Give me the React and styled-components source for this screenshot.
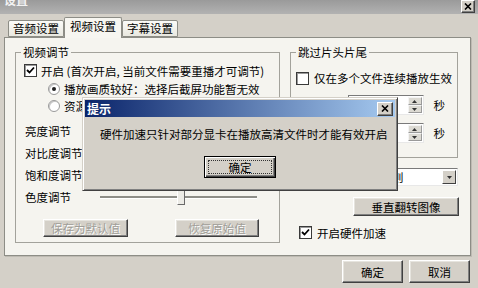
import React from 'react';
import styled, { createGlobalStyle } from 'styled-components';

const GlobalStyle = createGlobalStyle`
  html, body { margin: 0; padding: 0; }
  body {
    font-family: "Noto Sans CJK SC", "Noto Sans", sans-serif;
    font-size: 11.5px;
    color: #000;
    background: #d4d0c8;
  }
`;

const Window = styled.div`
  position: relative;
  width: 478px;
  height: 288px;
  overflow: hidden;
  background: #d4d0c8;
  display: flex;
  flex-direction: column;
`;

const TitleBar = styled.div`
  flex: none;
  height: 14px;
  background: linear-gradient(#9a9a9a, #b2b2b2);
  display: flex;
  justify-content: space-between;
  align-items: flex-start;
  padding: 0 3px 0 4px;
  overflow: hidden;
`;

const TitleText = styled.span`
  color: #f2f2f2;
  font-weight: bold;
  font-size: 12px;
  line-height: 14px;
  margin-top: -7px;
`;

const CloseBox = styled.div`
  width: ${(p) => p.w}px;
  height: ${(p) => p.h}px;
  box-sizing: border-box;
  background: #d4d0c8;
  border: 1px solid;
  border-color: #fff #404040 #404040 #fff;
  box-shadow: inset -1px -1px #808080;
  display: flex;
  align-items: center;
  justify-content: center;
  margin-top: ${(p) => p.top || 0}px;
`;

const Body = styled.div`
  padding: 3px 0 0 4px;
  display: flex;
  flex-direction: column;
`;

const Tabs = styled.div`
  display: flex;
  align-items: flex-end;
  height: 20px;
  margin-left: 4px;
  position: relative;
  z-index: 1;
`;

const Tab = styled.div`
  box-sizing: border-box;
  height: ${(p) => (p.active ? 21 : 17)}px;
  margin-bottom: ${(p) => (p.active ? -1 : 0)}px;
  padding: 0 ${(p) => (p.active ? 5 : 4)}px;
  border: 1px solid #8d8d86;
  border-bottom: ${(p) => (p.active ? 'none' : '1px solid #8d8d86')};
  border-radius: 2px 2px 0 0;
  background: ${(p) => (p.active ? '#f7f6f1' : 'linear-gradient(#fbfbf8, #e9e8e0)')};
  line-height: ${(p) => (p.active ? 17 : 15)}px;
  white-space: nowrap;
`;

const Panel = styled.div`
  box-sizing: border-box;
  width: 467px;
  height: 219px;
  border: 1px solid #8d8d86;
  box-shadow: 1px 1px 0 #bdbab2;
  background: #f5f4ef;
  display: flex;
  gap: 10px;
  padding: 7px 0 0 10px;
`;

const Group = styled.fieldset`
  box-sizing: border-box;
  margin: 0;
  padding: 0;
  min-width: 0;
  width: ${(p) => p.w}px;
  height: ${(p) => p.h}px;
  border: 1px solid #a3a29b;
  flex: none;
`;

const Legend = styled.legend`
  margin-left: 5px;
  padding: 0 2px;
  line-height: 14px;
`;

const GroupInner = styled.div`
  display: flex;
  flex-direction: column;
  padding: ${(p) => p.pad};
`;

const Row = styled.div`
  display: flex;
  align-items: center;
  height: ${(p) => p.h}px;
  margin-top: ${(p) => p.mt || 0}px;
  padding-left: ${(p) => p.pl || 0}px;
  padding-right: ${(p) => p.pr || 0}px;
  justify-content: ${(p) => p.justify || 'flex-start'};
  gap: ${(p) => p.gap || 0}px;
  white-space: nowrap;
`;

const CheckBox = styled.span`
  box-sizing: border-box;
  flex: none;
  width: 13px;
  height: 13px;
  background: #fff;
  border: 1px solid #3a3a3a;
  box-shadow: inset 1px 1px #9a9a9a;
  display: flex;
  align-items: center;
  justify-content: center;
  margin-right: ${(p) => p.gap}px;
`;

const Radio = styled.span`
  box-sizing: border-box;
  flex: none;
  width: 12px;
  height: 12px;
  border-radius: 50%;
  background: #fff;
  border: 1px solid #9a9a9a;
  box-shadow: inset 1px 1px #c8c8c8;
  display: flex;
  align-items: center;
  justify-content: center;
  margin-right: 4px;
  &::after {
    content: '';
    width: 4px;
    height: 4px;
    border-radius: 50%;
    background: ${(p) => (p.checked ? '#222' : 'transparent')};
  }
`;

const SliderLabel = styled.span`
  width: 75px;
  padding-left: 1px;
  flex: none;
`;

const Slider = styled.div`
  position: relative;
  width: 157px;
  height: 22px;
  flex: none;
  &::before {
    content: '';
    position: absolute;
    left: 0;
    right: 0;
    top: 10px;
    height: 2px;
    background: #8e8e88;
    border-bottom: 1px solid #fff;
  }
`;

const Thumb = styled.span`
  position: absolute;
  top: 3px;
  left: ${(p) => p.value}%;
  width: 8px;
  height: 16px;
  box-sizing: border-box;
  background: #ecebe6;
  border: 1px solid;
  border-color: #fff #6a6a6a #6a6a6a #fff;
`;

const Button = styled.button`
  box-sizing: border-box;
  width: ${(p) => p.w}px;
  height: ${(p) => p.h}px;
  margin: 0;
  margin-left: ${(p) => p.ml || 0}px;
  padding: 0;
  font: inherit;
  background: #d4d0c8;
  color: ${(p) => (p.disabled ? '#a09e98' : '#000')};
  text-shadow: ${(p) => (p.disabled ? '1px 1px 0 #fff' : 'none')};
  border: 1px solid;
  border-color: #fff #404040 #404040 #fff;
  box-shadow: inset -1px -1px #808080, inset 1px 1px #e6e4de;
  flex: none;
  align-self: ${(p) => p.align || 'auto'};
`;

const RightCol = styled.div`
  width: 168px;
  display: flex;
  flex-direction: column;
  flex: none;
`;

const Spin = styled.div`
  box-sizing: border-box;
  width: 76px;
  height: 20px;
  background: #fff;
  border: 1px solid;
  border-color: #7a7a7a #e8e8e8 #e8e8e8 #7a7a7a;
  display: flex;
  justify-content: flex-end;
  padding: 1px;
`;

const SpinButtons = styled.div`
  width: 14px;
  display: flex;
  flex-direction: column;
`;

const SpinHalf = styled.div`
  flex: 1;
  background: #dcdad3;
  border: 1px solid;
  border-color: #f4f4f4 #9a9a9a #9a9a9a #f4f4f4;
  display: flex;
  align-items: center;
  justify-content: center;
`;

const Dropdown = styled.div`
  box-sizing: border-box;
  width: 162px;
  height: 18px;
  margin: 10px 0 0 6px;
  background: #fff;
  border: 1px solid;
  border-color: #7a7a7a #e8e8e8 #e8e8e8 #7a7a7a;
  display: flex;
  align-items: center;
  justify-content: space-between;
  padding: 0 1px 0 3px;
  white-space: nowrap;
  overflow: hidden;
`;

const DropArrow = styled.span`
  box-sizing: border-box;
  width: 14px;
  height: 14px;
  flex: none;
  background: #d4d0c8;
  border: 1px solid;
  border-color: #fff #404040 #404040 #fff;
  display: flex;
  align-items: center;
  justify-content: center;
`;

const Footer = styled.div`
  display: flex;
  justify-content: flex-end;
  gap: 6px;
  margin-top: 4px;
  padding-right: 8px;
`;

const Dialog = styled.div`
  position: absolute;
  left: 82px;
  top: 97px;
  width: 316px;
  height: 94px;
  box-sizing: border-box;
  background: #d4d0c8;
  border: 1px solid;
  border-color: #d4d0c8 #404040 #404040 #d4d0c8;
  box-shadow: inset 1px 1px #fff, inset -1px -1px #808080;
  padding: 2px;
  display: flex;
  flex-direction: column;
  align-items: stretch;
`;

const DialogTitle = styled.div`
  height: 17px;
  background: linear-gradient(90deg, #0a246a, #a6caf0);
  display: flex;
  align-items: center;
  justify-content: space-between;
  padding: 0 2px 0 2px;
  color: #fff;
  font-weight: bold;
  font-size: 12px;
`;

const Message = styled.div`
  margin: 10px 0 0 15px;
  line-height: 14px;
  white-space: nowrap;
`;

const DefaultButton = styled.button`
  box-sizing: border-box;
  width: 72px;
  height: 22px;
  margin: 15px auto 0;
  padding: 0;
  font: inherit;
  color: #000;
  background: #d4d0c8;
  border: 1px solid #000;
  box-shadow: inset 1px 1px #fff, inset -1px -1px #404040, inset -2px -2px #808080;
  position: relative;
  &::after {
    content: '';
    position: absolute;
    inset: 3px;
    border: 1px dotted #333;
  }
`;

const Check = () => (
  <svg width="9" height="9" viewBox="0 0 9 9">
    <path d="M1 4 L3.5 6.5 L8 1.5" stroke="#000" strokeWidth="1.8" fill="none" />
  </svg>
);

const XMark = ({ size = 8 }) => (
  <svg width={size} height={size - 1} viewBox="0 0 8 7">
    <path d="M1 0.5 L7 6.5 M7 0.5 L1 6.5" stroke="#000" strokeWidth="1.6" />
  </svg>
);

const TinyArrow = ({ down }) => (
  <svg width="5" height="3" viewBox="0 0 5 3">
    <path d={down ? 'M0 0 H5 L2.5 3 Z' : 'M0 3 H5 L2.5 0 Z'} fill="#333" />
  </svg>
);

const sliders = [
  { label: '亮度调节', value: 49 },
  { label: '对比度调节', value: 49 },
  { label: '饱和度调节', value: 49 },
  { label: '色度调节', value: 49 },
];

const SpinRow = ({ mt }) => (
  <Row h={20} mt={mt} justify="flex-end" pr={12} gap={10}>
    <Spin>
      <SpinButtons>
        <SpinHalf><TinyArrow /></SpinHalf>
        <SpinHalf><TinyArrow down /></SpinHalf>
      </SpinButtons>
    </Spin>
    <span>秒</span>
  </Row>
);

const App = () => {
  return (
    <Window>
      <GlobalStyle />
      <TitleBar>
        <TitleText>设置</TitleText>
        <CloseBox w={14} h={13}><XMark /></CloseBox>
      </TitleBar>
      <Body>
        <Tabs>
          <Tab>音频设置</Tab>
          <Tab active>视频设置</Tab>
          <Tab>字幕设置</Tab>
        </Tabs>
        <Panel>
          <Group w={265} h={198}>
            <Legend>视频调节</Legend>
            <GroupInner pad="2px 0 0 8px">
              <Row h={19}>
                <CheckBox gap={4}><Check /></CheckBox>
                开启 (首次开启, 当前文件需要重播才可调节)
              </Row>
              <Row h={17} pl={24}>
                <Radio checked />
                播放画质较好：选择后截屏功能暂无效
              </Row>
              <Row h={17} pl={24}>
                <Radio />
                资源占用较少：可以正常截屏
              </Row>
              {sliders.map((s, i) => (
                <Row key={s.label} h={22} mt={i === 0 ? 6 : 0}>
                  <SliderLabel>{s.label}</SliderLabel>
                  <Slider>
                    <Thumb value={s.value} />
                  </Slider>
                </Row>
              ))}
              <Row h={18} mt={11}>
                <Button w={85} h={18} ml={19} disabled>保存为默认值</Button>
                <Button w={84} h={18} ml={47} disabled>恢复原始值</Button>
              </Row>
            </GroupInner>
          </Group>
          <RightCol>
            <Group w={168} h={113}>
              <Legend>跳过片头片尾</Legend>
              <GroupInner pad="0">
                <Row h={16} mt={11} pl={5}>
                  <CheckBox gap={5} />
                  仅在多个文件连续播放生效
                </Row>
                <SpinRow mt={9} />
                <SpinRow mt={8} />
              </GroupInner>
            </Group>
            <Dropdown>
              <span>按视频文件自身规则</span>
              <DropArrow><TinyArrow down /></DropArrow>
            </Dropdown>
            <Button w={106} h={19} align="flex-end" style={{ marginTop: 11, marginRight: -1 }}>
              垂直翻转图像
            </Button>
            <Row h={15} mt={9} pl={9}>
              <CheckBox gap={5}><Check /></CheckBox>
              开启硬件加速
            </Row>
          </RightCol>
        </Panel>
        <Footer>
          <Button w={61} h={23}>确定</Button>
          <Button w={61} h={23}>取消</Button>
        </Footer>
      </Body>
      <Dialog>
        <DialogTitle>
          <span>提示</span>
          <CloseBox w={16} h={14}><XMark /></CloseBox>
        </DialogTitle>
        <Message>硬件加速只针对部分显卡在播放高清文件时才能有效开启</Message>
        <DefaultButton>确定</DefaultButton>
      </Dialog>
    </Window>
  );
};

export default App;
